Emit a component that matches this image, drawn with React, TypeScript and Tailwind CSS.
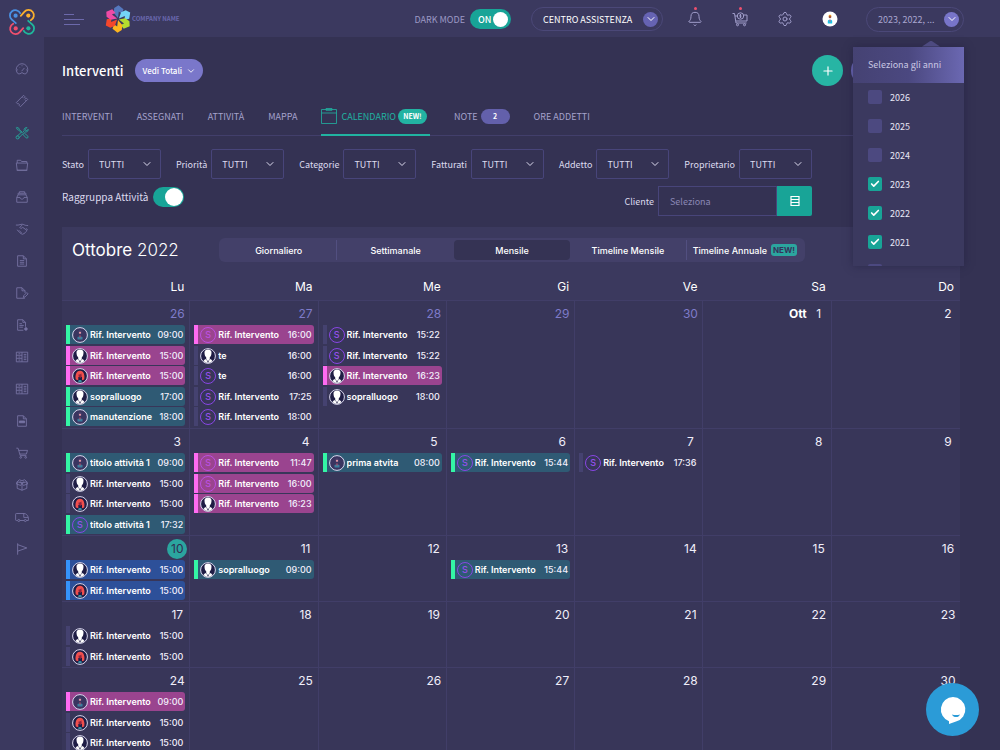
import type { ReactNode } from 'react';
import { Bell, Check, ChevronDown, Plus, Settings } from 'lucide-react';
import clsx from 'clsx';

type Tone = 'teal' | 'pink' | 'blue' | 'plain';
type Who = 'worker' | 'man' | 'woman' | 's';
type CalendarEvent = [tone: Tone, who: Who, title: string, time: string];
type Day = { n: number; prefix?: string; muted?: boolean; today?: boolean; events?: CalendarEvent[] };

const RIF = 'Rif. Intervento';

const tableIcon = (
  <path d="M1.5 2.5h13v11h-13ZM8 2.5v11M1.5 6H8M1.5 9.5H8M10 5h3M10 7h3M10 9h3M10 11h3M4 4.300h2M4 8h2M4 11.5h2" />
);

const sidebarIcons: { label: string; icon: ReactNode; active?: boolean }[] = [
  {
    label: 'Dashboard',
    icon: (
      <>
        <path d="M3.6 13.5A6.6 6.6 0 1 1 12.4 13.5H10.4A3.2 3.2 0 0 0 5.6 13.5Z" />
        <path d="M7.5 10.5 10.8 6.8M8 3.8v1M3.5 9h-1M13.5 9h-1M4.8 5.6l.6.6" />
      </>
    ),
  },
  {
    label: 'Ticket',
    icon: (
      <>
        <path d="M1.5 9.8 9.8 1.5l1.5 1.5a1.3 1.3 0 0 0 1.8 1.8l1.4 1.4-8.3 8.3-1.4-1.4a1.3 1.3 0 0 0-1.8-1.8Z" />
        <path d="m8.4 3.4 1 1M10.4 5.4l1 1M11.6 6.8l1 1" />
      </>
    ),
  },
  {
    label: 'Interventi',
    active: true,
    icon: (
      <>
        <path d="M2 1.5 1.5 2l1.3 2.2 1.4.4 3.4 3.5.8-.8-3.6-3.4-.5-1.5ZM9 9.6l3.8 4a1.4 1.4 0 0 0 1.9-2l-3.9-3.4-1.9 1.4" />
        <path d="m3.8 14.3 5.4-5.7M2 12l5.4-5M9 7l1.6-1.6c-.8-2.1.8-4 3-3.6l-1.8 1.8.4 1.5 1.5.4L15 3.7c.5 2-1.5 3.8-3.6 3l-.9.9" />
        <circle cx="3" cy="13" r="1.8" />
      </>
    ),
  },
  {
    label: 'Cartelle',
    icon: <path d="M2.5 14 1.5 5.8h13L13.5 14ZM2.5 5.8V2.6h4l1 1.4h6v1.8M2 14h12" />,
  },
  {
    label: 'Archivio',
    icon: (
      <>
        <path d="M2 8.500 3.500 5.500h9L14 8.500V14H2ZM2 8.500h3.700c0 2.600 4.600 2.600 4.600 0H14" />
        <path d="M3.500 5.500v-1.800h9v1.800M5 3.600V2h6v1.600" />
      </>
    ),
  },
  {
    label: 'Contratti',
    icon: (
      <>
        <path d="M1 3.500h2.500c2 0 2.500-1 4.500-1s3 1.500 5.500 1.500H15" />
        <path d="M8 3.500 5.500 6.300c.8 1.400 2.300 1 3.300-.2L13.500 9.500c-.5 1.800-2.500 3.800-5 4.500-2-.5-4.500-2.800-6-5.200M13 7.500c1 .2 1.500 1 .5 2M4.500 9.500l3 3" />
      </>
    ),
  },
  {
    label: 'Documenti',
    icon: <path d="M3 2h6.500L13 5.500V14H3ZM9.500 2v3.500H13M5.500 7.500h5M5.500 9.500h5M5.500 11.500h5" />,
  },
  {
    label: 'Modifica documento',
    icon: <path d="M11 13.500V14H2V2h6l3.500 3.500V8M8 2v3.500h3.500M9.500 13l.5-2 3.500-3.500 1.500 1.500-3.500 3.500Z" />,
  },
  {
    label: 'Rapporti',
    icon: (
      <>
        <path d="M9.500 14H3V2h6L12 5v5M9 2v3h3M5 6.500h3M5 8.500h5M5 10.500h4" />
        <circle cx="12.500" cy="12.500" r="1.500" fill="currentColor" />
      </>
    ),
  },
  { label: 'Tabelle', icon: tableIcon },
  { label: 'Listini', icon: tableIcon },
  {
    label: 'PDF',
    icon: (
      <>
        <path d="M3 2h6.500L13 5.500V14H3ZM9.500 2v3.500H13" />
        <path d="M5 8h6v2H5Z" fill="currentColor" />
      </>
    ),
  },
  {
    label: 'Ordini',
    icon: (
      <>
        <path d="M1.500 2.500h2L6 11h7M4.300 5h10L13 9.200H5.500" />
        <circle cx="6.500" cy="13" r="1" />
        <circle cx="12.200" cy="13" r="1" />
      </>
    ),
  },
  {
    label: 'Magazzino',
    icon: (
      <path d="M8 5.800 2.500 4.300v7.500L8 14l5.500-2.200V4.300L8 5.800V14M2.500 4.300 5 2l3 1.200L11 2l2.500 2.300M8 5.800 5.400 4M8 5.800 10.600 4M2.500 4.300l-1 2.500L6.500 8.500 8 5.800l1.500 2.700 5-1.700-1-2.500" />
    ),
  },
  {
    label: 'Mezzi',
    icon: (
      <>
        <path d="M3 12H1.500a.8.8 0 0 1-.8-.8V4.800a.8.8 0 0 1 .8-.8h8.800c2.500 0 4 2 5 4.500V12H13M5.500 12h5M10 4v4.500h5" />
        <circle cx="4.300" cy="12" r="1.200" />
        <circle cx="11.800" cy="12" r="1.200" />
      </>
    ),
  },
  { label: 'Segnalazioni', icon: <path d="M3 14.500v-13M3 3l10.500 3.800L3 10.500" /> },
];

const tabs = ['INTERVENTI', 'ASSEGNATI', 'ATTIVITÀ', 'MAPPA'];
const filters = ['Stato', 'Priorità', 'Categorie', 'Fatturati', 'Addetto', 'Proprietario'];
const views = ['Giornaliero', 'Settimanale', 'Mensile', 'Timeline Mensile', 'Timeline Annuale'];
const weekdays = ['Lu', 'Ma', 'Me', 'Gi', 'Ve', 'Sa', 'Do'];
const years = [2026, 2025, 2024, 2023, 2022, 2021];

const weeks: Day[][] = [
  [
    {
      n: 26,
      muted: true,
      events: [
        ['teal', 'worker', RIF, '09:00'],
        ['pink', 'man', RIF, '15:00'],
        ['pink', 'woman', RIF, '15:00'],
        ['teal', 'man', 'sopralluogo', '17:00'],
        ['teal', 'worker', 'manutenzione', '18:00'],
      ],
    },
    {
      n: 27,
      muted: true,
      events: [
        ['pink', 's', RIF, '16:00'],
        ['plain', 'man', 'te', '16:00'],
        ['plain', 's', 'te', '16:00'],
        ['plain', 's', RIF, '17:25'],
        ['plain', 's', RIF, '18:00'],
      ],
    },
    {
      n: 28,
      muted: true,
      events: [
        ['plain', 's', RIF, '15:22'],
        ['plain', 's', RIF, '15:22'],
        ['pink', 'man', RIF, '16:23'],
        ['plain', 'man', 'sopralluogo', '18:00'],
      ],
    },
    { n: 29, muted: true },
    { n: 30, muted: true },
    { n: 1, prefix: 'Ott' },
    { n: 2 },
  ],
  [
    {
      n: 3,
      events: [
        ['teal', 'worker', 'titolo attività 1', '09:00'],
        ['plain', 'man', RIF, '15:00'],
        ['plain', 'woman', RIF, '15:00'],
        ['teal', 's', 'titolo attività 1', '17:32'],
      ],
    },
    {
      n: 4,
      events: [
        ['pink', 's', RIF, '11:47'],
        ['pink', 's', RIF, '16:00'],
        ['pink', 'man', RIF, '16:23'],
      ],
    },
    { n: 5, events: [['teal', 'worker', 'prima atvita', '08:00']] },
    { n: 6, events: [['teal', 's', RIF, '15:44']] },
    { n: 7, events: [['plain', 's', RIF, '17:36']] },
    { n: 8 },
    { n: 9 },
  ],
  [
    {
      n: 10,
      today: true,
      events: [
        ['blue', 'man', RIF, '15:00'],
        ['blue', 'woman', RIF, '15:00'],
      ],
    },
    { n: 11, events: [['teal', 'man', 'sopralluogo', '09:00']] },
    { n: 12 },
    { n: 13, events: [['teal', 's', RIF, '15:44']] },
    { n: 14 },
    { n: 15 },
    { n: 16 },
  ],
  [
    {
      n: 17,
      events: [
        ['plain', 'man', RIF, '15:00'],
        ['plain', 'woman', RIF, '15:00'],
      ],
    },
    { n: 18 },
    { n: 19 },
    { n: 20 },
    { n: 21 },
    { n: 22 },
    { n: 23 },
  ],
  [
    {
      n: 24,
      events: [
        ['pink', 'worker', RIF, '09:00'],
        ['plain', 'woman', RIF, '15:00'],
        ['plain', 'man', RIF, '15:00'],
      ],
    },
    { n: 25 },
    { n: 26 },
    { n: 27 },
    { n: 28 },
    { n: 29 },
    { n: 30 },
  ],
];

const toneClass: Record<Tone, string> = {
  teal: 'border-[#34f5a5] bg-[#2f5a74]',
  pink: 'border-[#ff6bf2] bg-[#9a448f]',
  blue: 'border-[#3593fb] bg-[#2d5099]',
  plain: 'border-[#454270]',
};

function Avatar({ who, bright }: { who: Who; bright: boolean }) {
  if (who === 's') {
    return (
      <span
        className={clsx(
          'flex size-4 shrink-0 items-center justify-center rounded-full border text-[9px] leading-none font-medium',
          bright ? 'border-[#bb50e0] text-[#bb50e0]' : 'border-[#8846e4] text-[#9650ec]',
        )}
      >
        S
      </span>
    );
  }
  return (
    <svg viewBox="0 0 16 16" className="size-4 shrink-0" aria-hidden="true">
      <circle cx="8" cy="8" r="7.4" fill={who === 'worker' ? '#3a3560' : '#1f1d45'} stroke="#d9d7ee" />
      {who === 'worker' && (
        <>
          <path d="M6.5 4.500c0-1.800 3-1.800 3 0v2.200h-3Z" fill="#4a3f6b" />
          <circle cx="8" cy="5.800" r="1.100" fill="#e59aa8" />
          <path d="M5.500 12.500V10.500c0-1.500 5-1.500 5 0v2Z" fill="#3a7f9e" />
          <path d="M7.600 8.200h.8v2.500h-.8Z" fill="#e0465d" />
        </>
      )}
      {who === 'man' && (
        <>
          <path d="M4.500 4.200c0-3.700 7-3.700 7 0 0 2.500-.6 4.300-1.700 5.100v1.500L8 13.500l-1.800-2.700V9.300C5.100 8.500 4.500 6.700 4.500 4.200Z" fill="#fff" />
          <path d="M3.500 13c.8-1.200 1.700-1.700 2.700-1.900L8 15l1.800-3.900c1 .2 1.900.7 2.700 1.900A7 7 0 0 1 8 15a7 7 0 0 1-4.500-2Z" fill="#fff" />
        </>
      )}
      {who === 'woman' && (
        <>
          <path d="M3.800 11.500C3 8 4 2.800 8 2.800s5 5.200 4.200 8.700l-2.200.8V9H6.300v3.300Z" fill="#f0504e" />
          <path d="M6.500 6.500c1.500 0 2.300-.6 2.800-1.300l.5 3.300L8.300 10 6.600 8.500Z" fill="#8e2540" />
          <path d="M6 13.500c0-2 4-2 4 0L8 14.500Z" fill="#3a8fa5" />
        </>
      )}
    </svg>
  );
}

function EventRow({ event: [tone, who, title, time] }: { event: CalendarEvent }) {
  return (
    <li className="h-5 odd:h-[21px]">
      <button
        type="button"
        className={clsx(
          'flex h-[19px] w-full items-center gap-0.5 rounded-r-[3px] border-l-4 px-0.5 text-left text-[9px] text-white',
          toneClass[tone],
        )}
      >
        <Avatar who={who} bright={tone === 'pink'} />
        <span className="flex-1 truncate leading-4 font-semibold">{title}</span>
        <span className="font-medium text-[#f1eefb]">{time}</span>
      </button>
    </li>
  );
}

function DayCell({ day }: { day: Day }) {
  return (
    <div className="border-r border-b border-[#413e68] pl-1 last:border-r-0">
      <div className="flex h-6 items-end justify-end gap-0.5 pr-0.5 pb-px text-[12px]">
        {day.prefix && <strong className="leading-5 font-bold text-white">{day.prefix}</strong>}
        <span
          className={clsx(
            'flex size-5 items-center justify-center rounded-full',
            day.today ? 'bg-[#2ba59f] text-[#2f2d50]' : day.muted ? 'text-[#7e7bc9]' : 'text-[#f0eefa]',
          )}
        >
          {day.n}
        </span>
      </div>
      {day.events && (
        <ul className="pr-1">
          {day.events.map((event, i) => (
            <EventRow key={i} event={event} />
          ))}
        </ul>
      )}
    </div>
  );
}

function BrandMark() {
  const colors = ['#fbb02d', '#1fb89c', '#f0506e', '#4a90e2'];
  return (
    <svg viewBox="0 0 28 28" className="size-7" aria-hidden="true">
      {colors.map((color, i) => (
        <g key={color} transform={`rotate(${i * 90} 14 14)`}>
          <path
            d="M12.8 7.8 16.3 3.9A5.4 5.4 0 1 1 22.8 12.2"
            fill="none"
            stroke={color}
            strokeWidth="1.8"
            strokeLinecap="round"
          />
          <circle cx="20.3" cy="7.6" r="2.1" fill={color} />
        </g>
      ))}
    </svg>
  );
}

function CompanyLogo() {
  const colors = ['#5578be', '#74d4f7', '#b4dc2f', '#fdb51e', '#f4472c', '#ee4aa6'];
  return (
    <svg viewBox="0 0 28 28" className="size-7" aria-hidden="true">
      {colors.map((color, i) => (
        <g key={color} transform={`rotate(${i * 60} 14 14)`}>
          <path d="M14 13 9.8 8 10.2 3 14.500.2 19.500 4.200 18 8.800 14.800 6.500Z" fill={color} />
        </g>
      ))}
    </svg>
  );
}

function Sidebar() {
  return (
    <aside className="flex w-11 shrink-0 flex-col items-center bg-[#3b395f] pt-2">
      <a href="#" aria-label="Home">
        <BrandMark />
      </a>
      <nav className="mt-[17px] flex flex-col">
        {sidebarIcons.map(({ label, icon, active }) => (
          <a
            key={label}
            href="#"
            aria-label={label}
            className={clsx('flex h-8 items-center justify-center', active ? 'text-[#25a79a]' : 'text-[#7774a3]')}
          >
            <svg viewBox="0 0 16 16" className="size-[14px]" fill="none" stroke="currentColor" aria-hidden="true">
              {icon}
            </svg>
          </a>
        ))}
      </nav>
    </aside>
  );
}

function TopBar() {
  return (
    <header className="flex h-[37px] shrink-0 items-center bg-[#3b395f] pt-px pr-9 pl-5 text-[9px]">
      <button type="button" aria-label="Menu" className="flex w-5 flex-col gap-1 text-[#6c69ab]">
        <span className="h-px w-[10px] bg-current" />
        <span className="h-px w-5 bg-current" />
        <span className="h-px w-4 bg-current" />
      </button>
      <a href="#" className="ml-5 flex items-center text-[6px] font-bold text-[#6967ad]">
        <CompanyLogo />
        COMPANY NAME
      </a>
      <label className="ml-auto flex items-center gap-[5px] text-[#9d9ac6]">
        DARK MODE
        <span className="relative flex">
          <input type="checkbox" defaultChecked className="h-5 w-[41px] appearance-none rounded-full bg-[#18a497]" />
          <span className="pointer-events-none absolute inset-0 flex items-center justify-between pr-[3px] pl-2 font-medium text-white">
            ON
            <span className="size-[15px] rounded-full bg-white" />
          </span>
        </span>
      </label>
      <button
        type="button"
        className="ml-5 flex h-6 w-[132px] items-center justify-between rounded-full border border-[#4b4878] pr-1 pl-[11px] text-white"
      >
        CENTRO ASSISTENZA
        <span className="flex size-[15px] items-center justify-center rounded-full bg-[#6663b3]">
          <ChevronDown className="size-3" strokeWidth={2} />
        </span>
      </button>
      <div className="ml-6 flex items-center gap-[29px] text-[#a19ecb]">
        <button type="button" aria-label="Notifiche" className="relative">
          <Bell className="size-4" strokeWidth={1.5} />
          <span className="absolute -top-1 left-[7px] size-[3px] rounded-full bg-[#f0506e]" />
        </button>
        <button type="button" aria-label="Carrello" className="relative">
          <svg viewBox="0 0 16 16" className="size-4" fill="none" stroke="currentColor" aria-hidden="true">
            <path d="M.5 2.500h2L4 12h10.500M3 5h2.500M11.500 4h3.500v6H4" />
            <circle cx="8.500" cy="5" r="3.200" />
            <path d="M8.500 3v4M7.300 4.300h2M7.500 5.800h2" />
            <circle cx="5.500" cy="13.800" r="1" />
            <circle cx="12.500" cy="13.800" r="1" />
          </svg>
          <span className="absolute -top-1 left-[7px] size-[3px] rounded-full bg-[#f0506e]" />
        </button>
        <button type="button" aria-label="Impostazioni">
          <Settings className="size-4" strokeWidth={1.5} />
        </button>
        <button type="button" aria-label="Profilo">
          <svg viewBox="0 0 16 16" className="size-4" aria-hidden="true">
            <circle cx="8" cy="8" r="7.500" fill="#fff" />
            <path d="M6.500 5.500c0-2.500 3-2.500 3 0Z" fill="#f7a21b" />
            <circle cx="8" cy="6" r="1.300" fill="#a6553c" />
            <path d="M5.800 12.500V10c0-1.800 4.400-1.800 4.400 0v2.500Z" fill="#1cc3e6" />
            <path d="M7.600 8.500h.8V11h-.8Z" fill="#f0506e" />
          </svg>
        </button>
      </div>
      <YearPicker />
    </header>
  );
}

function YearPicker() {
  return (
    <div className="relative ml-7">
      <button
        type="button"
        aria-expanded="true"
        className="flex h-[25px] w-[98px] items-center justify-between rounded-full border border-[#4b4878] pr-1 pl-[11px] text-[#a9a6cf]"
      >
        2023, 2022, ...
        <span className="flex size-[15px] items-center justify-center rounded-full bg-[#7875c9] text-white">
          <ChevronDown className="size-3" />
        </span>
      </button>
      <div className="absolute top-[40px] right-0 z-20 w-[111px] bg-[#3b395f] shadow-[0_0_8px_rgba(30,28,60,0.5)]">
        <span className="absolute -top-[6px] right-6 h-[6px] w-[18px] bg-[#4d4a80] [clip-path:polygon(50%_0,100%_100%,0_100%)]" />
        <h2 className="flex h-9 items-center bg-linear-to-r from-[#454273] via-[#4b4880] to-[#6b68b2] pl-[15px] text-[9px] text-[#c9c7e3]">
          Seleziona gli anni
        </h2>
        <ul className="h-[183px] overflow-hidden pl-[15px]">
          {years.map((year) => (
            <li key={year}>
              <label className="flex h-[29px] items-center gap-2 text-[#e8e6f5]">
                <span className="relative flex">
                  <input
                    type="checkbox"
                    defaultChecked={year < 2024}
                    className="peer size-[14px] appearance-none rounded-[2px] bg-[#4c4980] checked:bg-[#18a497]"
                  />
                  <Check
                    className="pointer-events-none absolute top-[2px] left-[2px] size-[10px] text-white opacity-0 peer-checked:opacity-100"
                    strokeWidth={4}
                  />
                </span>
                {year}
              </label>
            </li>
          ))}
          <li className="flex h-[29px] items-center">
            <input type="checkbox" aria-label="2020" className="size-[14px] appearance-none rounded-[2px] bg-[#4c4980]" />
          </li>
        </ul>
      </div>
    </div>
  );
}

function Filters() {
  return (
    <div className="mr-[148px] text-[9px] text-[#dddbef]">
      <div className="mt-[13px] flex justify-between">
        {filters.map((name) => (
          <label key={name} className="flex items-center gap-1">
            {name}
            <span className="relative flex">
              <select className="h-[30px] w-[73px] appearance-none rounded-[2px] border border-[#48457a] bg-transparent pl-[10px] text-[#dddbef]">
                <option>TUTTI</option>
              </select>
              <ChevronDown className="pointer-events-none absolute top-[9px] right-2 size-3" strokeWidth={2} />
            </span>
          </label>
        ))}
      </div>
      <div className="mt-[7px] flex items-start justify-between">
        <label className="flex h-[22px] items-center gap-[5px] text-[10px]">
          Raggruppa Attività
          <span className="relative flex">
            <input type="checkbox" defaultChecked className="h-5 w-[31px] appearance-none rounded-full bg-[#18a497]" />
            <span className="pointer-events-none absolute top-px right-px size-[18px] rounded-full bg-white" />
          </span>
        </label>
        <div className="flex items-center">
          <label htmlFor="cliente" className="mr-1">
            Cliente
          </label>
          <input
            id="cliente"
            placeholder="Seleziona"
            className="h-[30px] w-[119px] border border-[#48457a] bg-transparent pl-[11px] placeholder:text-[#8b88b5]"
          />
          <button
            type="button"
            aria-label="Elenco clienti"
            className="flex h-[30px] w-[35px] items-center justify-center rounded-r-[2px] bg-[#18a497] text-white"
          >
            <svg viewBox="0 0 10 12" className="h-3 w-[10px]" fill="none" stroke="currentColor" strokeWidth="1.2" aria-hidden="true">
              <path d="M1 1.500h8v9H1ZM1 4.500h8M1 7.500h8" />
            </svg>
          </button>
        </div>
      </div>
    </div>
  );
}

function Tabs() {
  return (
    <nav className="mt-3 flex h-[38px] items-stretch gap-6 border-b border-[#423f6b] text-[9px] text-[#a5a2cc]">
      {tabs.map((tab) => (
        <a key={tab} href="#" className="flex items-center">
          {tab}
        </a>
      ))}
      <a href="#" className="-mb-px flex items-center border-b-2 border-[#21b3a1] pr-[3px] text-[#21b3a1]">
        <svg viewBox="0 0 16 16" className="mr-1 size-4" fill="none" stroke="currentColor" strokeWidth="0.8" aria-hidden="true">
          <path d="M.5 1.500h15v14H.5ZM.5 5h15M5 .5h6v1.800H5Z" />
        </svg>
        CALENDARIO
        <span className="ml-0.5 flex h-[15px] w-[29px] items-center justify-center rounded-full bg-[#22b3a2] text-[7px] font-bold text-white">
          NEW!
        </span>
      </a>
      <a href="#" className="flex items-center gap-[3px]">
        NOTE
        <span className="flex h-[15px] w-[29px] items-center justify-center rounded-full bg-[#6360ab] text-[7px] font-bold text-white">
          2
        </span>
      </a>
      <a href="#" className="flex items-center">
        ORE ADDETTI
      </a>
    </nav>
  );
}

function Calendar() {
  return (
    <section className="mt-[11px] bg-[#3b395e] font-['Inter',sans-serif] text-white">
      <div className="flex h-[46px] items-center pl-[10px]">
        <h2 className="w-[147px] text-[17px] leading-6">
          Ottobre <span className="font-light">2022</span>
        </h2>
        <div className="grid h-6 w-[586px] grid-cols-5 rounded-md bg-[#434069] p-0.5 text-[9px]">
          {views.map((view, i) => (
            <button
              key={view}
              type="button"
              className={clsx(
                'flex items-center justify-center gap-1 font-medium whitespace-nowrap',
                view === 'Mensile' && 'rounded bg-[#353354]',
                (i === 0 || i === 3) && 'border-r border-[#524f80]',
              )}
            >
              {view}
              {i === 4 && (
                <span className="rounded-[3px] bg-[#2ba59f] px-0.5 text-[8px] leading-3 font-bold text-[#35325a]">NEW!</span>
              )}
            </button>
          ))}
        </div>
      </div>
      <div className="grid h-7 grid-cols-7 items-center border-b border-[#413e68] text-right text-[12px]">
        {weekdays.map((d) => (
          <span key={d} className="pr-[6px]">
            {d}
          </span>
        ))}
      </div>
      <div className="bg-[#383659]">
        {weeks.map((week, i) => (
          <div key={i} className="grid grid-cols-7">
            {week.map((day) => (
              <DayCell key={day.n} day={day} />
            ))}
          </div>
        ))}
      </div>
    </section>
  );
}

export default function App() {
  return (
    <div className="flex h-screen overflow-hidden bg-[#343253] font-['Noto_Sans_CJK_SC',sans-serif] leading-none">
      <Sidebar />
      <div className="flex min-w-0 flex-1 flex-col">
        <TopBar />
        <main className="min-h-0 flex-1 overflow-hidden pt-[18px] pr-10 pl-[18px]">
          <div className="flex h-[31px] items-center">
            <h1 className="text-[13px] font-medium text-white">Interventi</h1>
            <button
              type="button"
              className="ml-3 flex h-[23px] w-[68px] items-center justify-center gap-1 rounded-full bg-[#7a77ca] text-[8px] font-medium text-white"
            >
              Vedi Totali
              <ChevronDown className="size-[10px]" />
            </button>
            <div className="mr-[78px] ml-auto flex gap-2 text-white">
              <button
                type="button"
                aria-label="Nuovo intervento"
                className="flex size-[31px] items-center justify-center rounded-full bg-[#27b5a4]"
              >
                <Plus className="size-[14px]" strokeWidth={2} />
              </button>
              <button type="button" aria-label="Altro" className="size-[31px] rounded-full bg-[#6d6abb]" />
            </div>
          </div>
          <Tabs />
          <Filters />
          <Calendar />
        </main>
      </div>
      <button
        type="button"
        aria-label="Chat"
        className="fixed right-[21px] bottom-[14px] z-30 flex size-[53px] items-center justify-center rounded-full bg-[#2b9bd7]"
      >
        <svg viewBox="0 0 28 28" className="size-7" aria-hidden="true">
          <path d="M14 1a12.500 12.500 0 0 1 3 24.600L10 28v-2.800A12.500 12.500 0 0 1 14 1Z" fill="#fff" />
          <path d="M13 18.500c2.500.8 5.500.8 8 0-1 3.300-6.500 3.600-8 0Z" fill="#2b9bd7" />
        </svg>
      </button>
    </div>
  );
}
